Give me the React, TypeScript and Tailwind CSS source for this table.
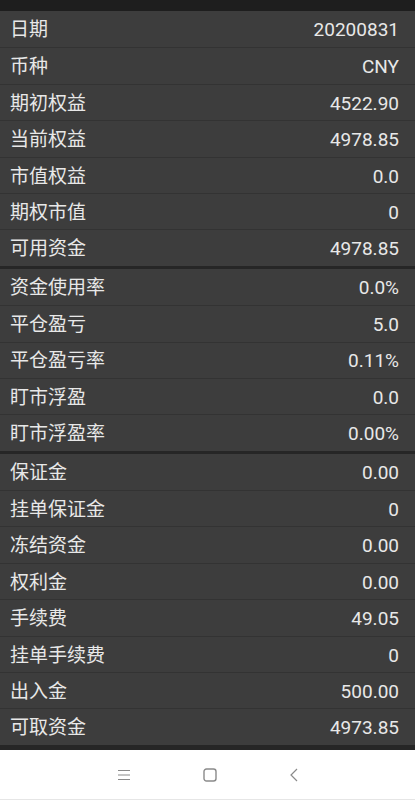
const groups: [string, string][][] = [
  [
    ["日期", "20200831"],
    ["币种", "CNY"],
    ["期初权益", "4522.90"],
    ["当前权益", "4978.85"],
    ["市值权益", "0.0"],
    ["期权市值", "0"],
    ["可用资金", "4978.85"],
  ],
  [
    ["资金使用率", "0.0%"],
    ["平仓盈亏", "5.0"],
    ["平仓盈亏率", "0.11%"],
    ["盯市浮盈", "0.0"],
    ["盯市浮盈率", "0.00%"],
  ],
  [
    ["保证金", "0.00"],
    ["挂单保证金", "0"],
    ["冻结资金", "0.00"],
    ["权利金", "0.00"],
    ["手续费", "49.05"],
    ["挂单手续费", "0"],
    ["出入金", "500.00"],
    ["可取资金", "4973.85"],
  ],
];

export default function App() {
  return (
    <div className="flex h-[800px] w-[415px] flex-col bg-[#262626] font-['Roboto','Noto_Sans_CJK_SC',sans-serif] text-[19px] text-[#e8e8e8]">
      <div className="h-[11px] bg-[#1e1e1e]" />
      <div className="flex flex-col gap-[3px]">
        {groups.map((rows, gi) => (
          <div key={gi} className="flex flex-col">
            {rows.map(([label, value], i) => (
              <div
                key={label}
                className={`flex h-[36.4px] items-center justify-between bg-[#3d3d3d] pt-[3px] pl-[10px] pr-[16px] ${i > 0 ? "border-t border-[#333333]" : ""}`}
              >
                <span>{label}</span>
                <span>{value}</span>
              </div>
            ))}
          </div>
        ))}
      </div>
      <div className="flex-1" />
      <div className="flex h-[50px] items-center justify-center gap-[72px] border-b border-[#e6e6e6] bg-white text-[#8a8a8a]">
        <svg width="14" height="12" viewBox="0 0 14 12" fill="none" stroke="currentColor" strokeWidth="1.2">
          <path d="M1 1.5h12M1 6h12M1 10.5h12" />
        </svg>
        <svg width="14" height="14" viewBox="0 0 14 14" fill="none" stroke="currentColor" strokeWidth="1.4">
          <rect x="1" y="1" width="12" height="12" rx="2.5" />
        </svg>
        <svg width="10" height="14" viewBox="0 0 10 14" fill="none" stroke="currentColor" strokeWidth="1.2">
          <path d="M8 1L2 7l6 6" />
        </svg>
      </div>
    </div>
  );
}
